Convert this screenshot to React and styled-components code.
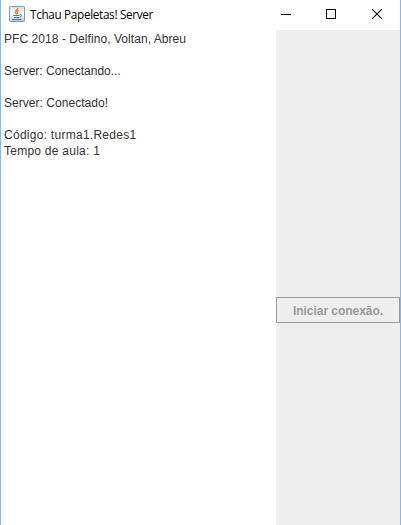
import React from "react";
import styled, { createGlobalStyle } from "styled-components";

const GlobalStyle = createGlobalStyle`
  * { box-sizing: border-box; }
  body { margin: 0; background: #fff; }
`;

const Window = styled.div`
  display: flex;
  flex-direction: column;
  width: 401px;
  height: 525px;
  overflow: hidden;
  background: #fff;
  border: solid #80b9f5;
  border-width: 0 1px;
`;

const TitleBar = styled.header`
  display: flex;
  flex: 0 0 30px;
  align-items: center;
  padding-left: 8px;
`;

const AppIcon = styled.svg`
  width: 16px;
  height: 16px;
  margin-top: -2px;
`;

const Title = styled.h1`
  flex: 1;
  margin: -2px 0 0 5px;
  font: 400 11.7px/16px "Open Sans", "Noto Sans", sans-serif;
  letter-spacing: -0.3px;
  color: #000;
  white-space: nowrap;
`;

const Controls = styled.div`
  display: flex;
  height: 30px;
`;

const Control = styled.button`
  display: flex;
  align-items: flex-start;
  width: ${(p) => p.$width}px;
  height: 30px;
  padding: 9px 0 0 ${(p) => p.$inset}px;
  border: 0;
  background: none;
`;

const Content = styled.main`
  display: flex;
  flex: 1;
`;

const Log = styled.section`
  flex: 1;
  padding: 1px 3px;
  font: 400 12px/16px "Liberation Sans", Arial, sans-serif;
  color: #333;
`;

const Line = styled.p`
  height: 16px;
  margin: 0;
  white-space: pre;
  letter-spacing: ${(p) => p.$spacing || 0}px;
`;

const SidePanel = styled.aside`
  display: flex;
  align-items: flex-start;
  width: 124px;
  padding-top: 267px;
  background: #eee;
`;

const ConnectButton = styled.button`
  width: 124px;
  height: 26px;
  padding: 1px 0 0;
  border: 1px solid #999;
  border-radius: 0;
  background: #eee;
  color: #999;
  font: 700 12px/16px "Liberation Sans", Arial, sans-serif;
  letter-spacing: -0.04px;
  white-space: nowrap;
`;

const lines = [
  ["PFC 2018 - Delfino, Voltan, Abreu", 0.06],
  [""],
  ["Server: Conectando...", 0],
  [""],
  ["Server: Conectado!", 0.04],
  [""],
  ["Código: turma1.Redes1", 0.27],
  ["Tempo de aula: 1", 0.25],
];

function JavaIcon() {
  return (
    <AppIcon viewBox="0 0 16 16" fill="none">
      <defs>
        <linearGradient id="tile" x1="0" y1="0" x2="0" y2="1">
          <stop offset="0" stopColor="#d3dfe9" />
          <stop offset="0.5" stopColor="#ffffff" />
          <stop offset="1" stopColor="#b9cad9" />
        </linearGradient>
      </defs>
      <rect x="0.5" y="0.5" width="15" height="15" rx="0.8" fill="url(#tile)" stroke="#8199ae" />
      <path d="M8.6 2C9.2 4 5.6 4.7 6.3 6.6L7.7 8.3M10.2 4.2C8.2 5 7.4 5.8 8.7 7.8" stroke="#ef7b22" strokeWidth="1.3" />
      <path d="M4.2 9.5h6.5M5 11.5h5.4M3 13.5h9.5" stroke="#54789b" strokeWidth="1" />
      <path d="M11 8.7c2-.5 2 1.9-.1 2.4" stroke="#54789b" strokeWidth="1" />
    </AppIcon>
  );
}

export default function App() {
  return (
    <>
      <GlobalStyle />
      <Window>
        <TitleBar>
          <JavaIcon />
          <Title>Tchau Papeletas! Server</Title>
          <Controls>
            <Control $width={45} $inset={17} aria-label="Minimizar">
              <svg width="10" height="10" shapeRendering="crispEdges">
                <rect y="5" width="10" height="1" />
              </svg>
            </Control>
            <Control $width={45} $inset={17} aria-label="Maximizar">
              <svg width="10" height="10" fill="none" stroke="#000" shapeRendering="crispEdges">
                <rect x="0.5" y="0.5" width="9" height="9" />
              </svg>
            </Control>
            <Control $width={46} $inset={18} aria-label="Fechar">
              <svg width="10" height="10" stroke="#000" strokeWidth="1.1">
                <path d="M0 0L10 10M10 0L0 10" />
              </svg>
            </Control>
          </Controls>
        </TitleBar>
        <Content>
          <Log>
            {lines.map(([text, spacing], i) => (
              <Line key={i} $spacing={spacing}>{text}</Line>
            ))}
          </Log>
          <SidePanel>
            <ConnectButton disabled>Iniciar conexão.</ConnectButton>
          </SidePanel>
        </Content>
      </Window>
    </>
  );
}
